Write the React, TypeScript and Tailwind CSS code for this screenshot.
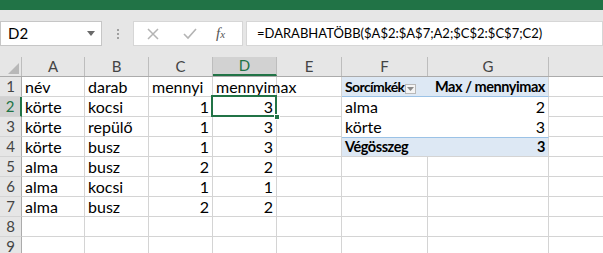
import React from "react";

const font = { fontFamily: "Lato, 'Open Sans', sans-serif" };

const cols = [
  { name: "A", w: "w-[63px]" },
  { name: "B", w: "w-[64px]" },
  { name: "C", w: "w-[64px]" },
  { name: "D", w: "w-[64px]" },
  { name: "E", w: "w-[65px]" },
  { name: "F", w: "w-[86px]" },
  { name: "G", w: "w-[121px]" },
];

type Cell = { v?: string; num?: boolean };

const data: Cell[][] = [
  [{ v: "név" }, { v: "darab" }, { v: "mennyi" }, { v: "mennyimax" }],
  [{ v: "körte" }, { v: "kocsi" }, { v: "1", num: true }, { v: "3", num: true }],
  [{ v: "körte" }, { v: "repülő" }, { v: "1", num: true }, { v: "3", num: true }],
  [{ v: "körte" }, { v: "busz" }, { v: "1", num: true }, { v: "3", num: true }],
  [{ v: "alma" }, { v: "busz" }, { v: "2", num: true }, { v: "2", num: true }],
  [{ v: "alma" }, { v: "kocsi" }, { v: "1", num: true }, { v: "1", num: true }],
  [{ v: "alma" }, { v: "busz" }, { v: "2", num: true }, { v: "2", num: true }],
  [],
  [],
];

function Pivot({ row }: { row: number }) {
  const blue = "bg-[#dde8f4]";
  const bold = "font-bold text-[14.5px] tracking-[-0.45px] whitespace-nowrap";
  if (row === 0)
    return (
      <>
        <div className={`w-[86px] shrink-0 h-full ${blue} border-b border-[#9bc2e6] flex items-center pl-[3px] font-bold text-[14px] tracking-[-0.6px] whitespace-nowrap relative`}>
          Sorcímkék
          <span className="absolute z-10 left-[63px] top-[7px] w-[11px] h-[10px] bg-[#f4f4f4] border border-[#b8b8b8] flex items-center justify-center">
            <svg width="7" height="4" viewBox="0 0 7 4"><path d="M0 0h7L3.5 4z" fill="#8a8a8a" /></svg>
          </span>
        </div>
        <div className={`w-[121px] shrink-0 h-full ${blue} border-b border-[#9bc2e6] border-r border-r-[#d4d4d4] flex items-center justify-end pr-[3px] ${bold}`}>
          Max / mennyimax
        </div>
      </>
    );
  if (row === 1 || row === 2)
    return (
      <>
        <div className="w-[86px] shrink-0 h-full flex items-center pl-[3px]">{row === 1 ? "alma" : "körte"}</div>
        <div className="w-[121px] shrink-0 h-full border-r border-[#d4d4d4] flex items-center justify-end pr-[3px]">{row === 1 ? "2" : "3"}</div>
      </>
    );
  if (row === 3)
    return (
      <>
        <div className={`w-[86px] shrink-0 h-full ${blue} border-t border-t-[#9bc2e6] border-b border-b-[#d4d4d4] flex items-center pl-[3px] ${bold}`}>Végösszeg</div>
        <div className={`w-[121px] shrink-0 h-full ${blue} border-t border-t-[#9bc2e6] border-r border-r-[#d4d4d4] border-b border-b-[#d4d4d4] flex items-center justify-end pr-[3px] ${bold}`}>3</div>
      </>
    );
  return (
    <>
      <div className="w-[86px] shrink-0 h-full border-r border-b border-[#d4d4d4]" />
      <div className="w-[121px] shrink-0 h-full border-r border-b border-[#d4d4d4]" />
    </>
  );
}

export default function App() {
  return (
    <div className="w-[603px] h-[253px] overflow-hidden bg-white text-[16px] text-black" style={font}>
      <div className="h-[10px] bg-[#217346]" />
      <div className="h-[47px] bg-[#e6e6e6] flex items-start pt-[11px]">
        <div className="w-[102px] shrink-0 h-[25px] bg-white border border-[#c6c6c6] flex items-center justify-between pl-[7px] pr-[6px] text-[15px]">
          <span>D2</span>
          <svg width="8" height="5" viewBox="0 0 8 5"><path d="M0 0h8L4 5z" fill="#6a6a6a" /></svg>
        </div>
        <div className="w-[31px] shrink-0 h-[25px] flex flex-col items-center justify-center gap-[2px]">
          <span className="w-[2px] h-[2px] bg-[#a0a0a0]" />
          <span className="w-[2px] h-[2px] bg-[#a0a0a0]" />
          <span className="w-[2px] h-[2px] bg-[#a0a0a0]" />
        </div>
        <div className="w-[110px] shrink-0 h-[25px] bg-white border border-[#d6d6d6] flex items-center">
          <svg className="ml-[13px]" width="12" height="12" viewBox="0 0 12 12"><path d="M1 1l10 10M11 1L1 11" stroke="#b4b4b4" strokeWidth="1.5" /></svg>
          <svg className="ml-[24px]" width="14" height="12" viewBox="0 0 14 12"><path d="M1 6l4 4 8-9" stroke="#b4b4b4" strokeWidth="1.6" fill="none" /></svg>
          <span className="ml-[19px] italic text-[#555] text-[15px]" style={{ fontFamily: "'Liberation Serif', serif" }}>f<span className="text-[11px]">x</span></span>
        </div>
        <div className="ml-[3px] flex-1 h-[25px] bg-white border border-[#d6d6d6] flex items-center pl-[10px] whitespace-nowrap text-[13px]">
          =DARABHATÖBB($A$2:$A$7;A2;$C$2:$C$7;C2)
        </div>
      </div>

      <div className="flex h-[20px] bg-[#e6e6e6] border-b border-[#ababab] text-[#444] text-[15px]">
        <div className="w-[22px] shrink-0 h-full border-r border-[#bdbdbd] relative">
          <svg className="absolute right-[2px] bottom-[2px]" width="11" height="11" viewBox="0 0 11 11"><path d="M11 0v11H0z" fill="#b8b8b8" /></svg>
        </div>
        {cols.map(c => (
          <div
            key={c.name}
            className={`${c.w} shrink-0 h-full border-r border-[#bdbdbd] flex items-center justify-center ${c.name === "D" ? "bg-[#d2d2d2] border-b-2 border-b-[#217346] text-[#217346]" : ""}`}
          >
            {c.name}
          </div>
        ))}
        <div className="flex-1" />
      </div>

      {data.map((row, ri) => (
        <div key={ri} className="flex h-[20px]">
          <div
            className={`w-[22px] shrink-0 h-full border-b border-[#d4d4d4] flex items-center justify-center text-[#444] text-[15px] ${ri === 1 ? "bg-[#d2d2d2] border-r-2 border-r-[#217346] text-[#217346]" : "bg-[#e6e6e6] border-r border-r-[#ababab]"}`}
          >
            {ri + 1}
          </div>
          {cols.slice(0, 5).map((c, ci) => {
            const cell = row[ci] || {};
            const active = ri === 1 && ci === 3;
            return (
              <div
                key={c.name}
                className={`${c.w} shrink-0 h-full border-r border-b border-[#d4d4d4] flex items-center relative whitespace-nowrap ${cell.num ? "justify-end pr-[3px]" : "pl-[3px]"}`}
              >
                {cell.v}
                {active && (
                  <>
                    <span className="absolute -left-[2px] -top-[2px] right-[-1px] bottom-[-1px] border-2 border-[#217346]" />
                    <span className="absolute z-10 right-[-4px] bottom-[-4px] w-[6px] h-[6px] bg-[#217346] border border-white" />
                  </>
                )}
              </div>
            );
          })}
          <Pivot row={ri} />
          <div className="flex-1 h-full border-b border-[#d4d4d4]" />
        </div>
      ))}
    </div>
  );
}
